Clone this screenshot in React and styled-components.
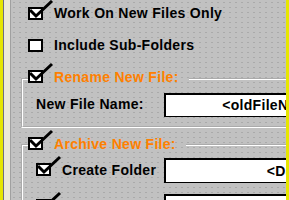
import styled, { createGlobalStyle } from "styled-components";

const Global = createGlobalStyle`
  html, body {
    margin: 0;
    padding: 0;
    overflow: hidden;
  }
  body {
    font-family: "Liberation Sans", Arial, sans-serif;
  }
`;

function Check({ checked }) {
  return (
    <Box>
      {checked && (
        <Tick viewBox="0 0 27 20">
          <polyline points="2,10 8,16 24,1" />
        </Tick>
      )}
    </Box>
  );
}

export default function App() {
  return (
    <Page>
      <Global />
      <Rail />
      <Content>
        <CheckRow>
          <Check checked />
          <Caption>Work On New Files Only</Caption>
        </CheckRow>
        <CheckRow $top={6}>
          <Check />
          <Caption>Include Sub-Folders</Caption>
        </CheckRow>

        <Group $top={11} $pt={4} $pb={9}>
          <Legend $h={20}>
            <LegendRow>
              <Check checked />
              <Title>Rename New File:</Title>
            </LegendRow>
          </Legend>
          <FieldRow>
            <Label>New File Name:</Label>
            <Field readOnly value="<oldFileName>" $w={220} $h={24} />
          </FieldRow>
        </Group>

        <Group $top={8} $pt={5} $pb={9}>
          <Legend $h={17}>
            <LegendRow>
              <Check checked />
              <Title>Archive New File:</Title>
            </LegendRow>
          </Legend>
          <FieldRow>
            <Label>
              <Check checked />
              <span>Create Folder</span>
            </Label>
            <Field readOnly value="<Date>" $w={254} $h={25} />
          </FieldRow>
          <FieldRow>
            <Label>
              <Check checked />
              <span>Move File</span>
            </Label>
            <Field readOnly value="<Archive>" $w={254} $h={25} />
          </FieldRow>
        </Group>
      </Content>
      <Stripe />
    </Page>
  );
}

const Page = styled.div`
  display: flex;
  width: 289px;
  height: 200px;
  overflow: hidden;
  background-color: #c0c0c0;
`;

const Stripe = styled.div`
  width: 3px;
  flex-shrink: 0;
  background: #e6e600;
`;

const Rail = styled.div`
  flex-shrink: 0;
  box-sizing: content-box;
  width: 6px;
  padding-left: 1px;
  background: #ece9d8;
  border-left: 3px solid #e6e600;
  border-right: 1px solid #a0a0a0;
  box-shadow: inset 1px 0 0 #6f6f80;
`;

const Content = styled.div`
  flex: 1;
  min-width: 0;
  overflow: hidden;
  padding-left: 10px;
  background-color: #c1c1c1;
  background-image: radial-gradient(circle, #aaaaaa 0.55px, transparent 0.9px);
  background-size: 6px 5px;
`;

const CheckRow = styled.div`
  display: flex;
  align-items: center;
  gap: 11px;
  height: 26px;
  margin-top: ${(p) => p.$top || 0}px;
  padding-left: 7px;
`;

const Box = styled.span`
  position: relative;
  display: inline-block;
  flex-shrink: 0;
  width: 15px;
  height: 13px;
  box-sizing: border-box;
  border: 2px solid #000;
  background: #fff;
`;

const Tick = styled.svg`
  position: absolute;
  left: -2px;
  top: -9px;
  width: 27px;
  height: 20px;
  overflow: visible;

  polyline {
    fill: none;
    stroke: #000;
    stroke-width: 3;
    stroke-linejoin: miter;
  }
`;

const Caption = styled.span`
  font-size: 14px;
  font-weight: bold;
  letter-spacing: 0.3px;
  color: #000;
  line-height: 16px;
  white-space: nowrap;
`;

const Title = styled(Caption)`
  color: #ff8000;
`;

const Group = styled.fieldset`
  display: flex;
  flex-direction: column;
  gap: 11px;
  width: 440px;
  min-width: 0;
  margin: ${(p) => p.$top}px 0 0 0;
  padding: ${(p) => p.$pt}px 0 ${(p) => p.$pb}px 0;
  border: 2px groove #fff;
  border-right: none;
`;

const Legend = styled.legend`
  display: flex;
  align-items: flex-start;
  height: ${(p) => p.$h}px;
  box-sizing: border-box;
  margin-left: 5px;
  padding: 0 10px 0 0;
`;

const LegendRow = styled.div`
  display: flex;
  align-items: center;
  gap: 11px;
  height: 13px;
  margin-top: 1px;
`;

const FieldRow = styled.div`
  display: flex;
  align-items: center;
  padding-left: 13px;
`;

const Label = styled.div`
  display: flex;
  align-items: center;
  gap: 11px;
  width: 128px;
  flex-shrink: 0;
  font-size: 14px;
  font-weight: bold;
  letter-spacing: 0.3px;
  color: #000;
  white-space: nowrap;
  margin-top: -2px;
`;

const Field = styled.input`
  width: ${(p) => p.$w}px;
  height: ${(p) => p.$h}px;
  flex-shrink: 0;
  box-sizing: border-box;
  padding: 0;
  border: 1px solid #000;
  box-shadow: inset 1px 1px 0 #000;
  background: #fff;
  color: #000;
  font-family: "Liberation Sans", Arial, sans-serif;
  font-size: 14px;
  font-weight: bold;
  letter-spacing: 0.3px;
  text-align: center;
  outline: none;
`;
